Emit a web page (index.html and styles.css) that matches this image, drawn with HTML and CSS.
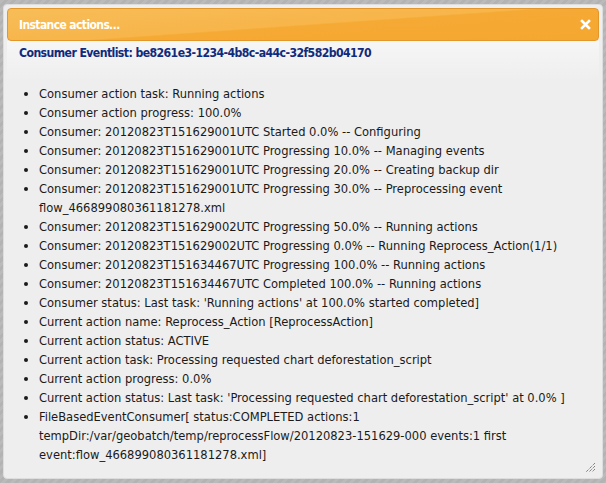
FILE: index.html
```html
<!DOCTYPE html>
<html>
<head>
<meta charset="utf-8">
<link rel="stylesheet" href="styles.css">
</head>
<body>
<div class="dialog">
  <div class="titlebar">
    <span class="title">Instance actions…</span>
    <span class="close" aria-label="close">
      <svg width="11" height="11" viewBox="0 0 11 11"><path d="M2 2 L9 9 M9 2 L2 9" stroke="#fff" stroke-width="2.6" stroke-linecap="square"/></svg>
    </span>
  </div>
  <div class="content">
    <h3 class="heading">Consumer Eventlist: be8261e3-1234-4b8c-a44c-32f582b04170</h3>
    <ul class="events">
      <li>Consumer action task: Running actions</li>
      <li>Consumer action progress: 100.0%</li>
      <li>Consumer: 20120823T151629001UTC Started 0.0% -- Configuring</li>
      <li>Consumer: 20120823T151629001UTC Progressing 10.0% -- Managing events</li>
      <li>Consumer: 20120823T151629001UTC Progressing 20.0% -- Creating backup dir</li>
      <li>Consumer: 20120823T151629001UTC Progressing 30.0% -- Preprocessing event flow_466899080361181278.xml</li>
      <li>Consumer: 20120823T151629002UTC Progressing 50.0% -- Running actions</li>
      <li>Consumer: 20120823T151629002UTC Progressing 0.0% -- Running Reprocess_Action(1/1)</li>
      <li>Consumer: 20120823T151634467UTC Progressing 100.0% -- Running actions</li>
      <li>Consumer: 20120823T151634467UTC Completed 100.0% -- Running actions</li>
      <li>Consumer status: Last task: 'Running actions' at 100.0% started completed]</li>
      <li>Current action name: Reprocess_Action [ReprocessAction]</li>
      <li>Current action status: ACTIVE</li>
      <li>Current action task: Processing requested chart deforestation_script</li>
      <li>Current action progress: 0.0%</li>
      <li>Current action status: Last task: 'Processing requested chart deforestation_script' at 0.0% ]</li>
      <li>FileBasedEventConsumer[ status:COMPLETED actions:1 tempDir:/var/geobatch/temp/reprocessFlow/20120823-151629-000 events:1 first event:flow_466899080361181278.xml]</li>
    </ul>
    <span class="grip">
      <svg width="11" height="11" viewBox="0 0 11 11"><path d="M10 1 L1 10 M10 4 L4 10 M10 7 L7 10" stroke="#555" stroke-width="1" stroke-dasharray="1 1"/></svg>
    </span>
  </div>
</div>
</body>
</html>
```
FILE: styles.css
```css
html, body {
  margin: 0;
  padding: 0;
}
body {
  width: 606px;
  height: 483px;
  overflow: hidden;
  background: repeating-linear-gradient(135deg, #bababa 0, #bababa 3px, #b3b3b3 3px, #b3b3b3 6px);
  font-family: "DejaVu Sans Condensed", "DejaVu Sans", sans-serif;
}
.dialog {
  position: relative;
  box-sizing: border-box;
  margin: 4px 0 0 3px;
  width: 600px;
  height: 475px;
  padding: 3px;
  background: #eeeeee;
  border: 1px solid #dddddd;
  border-radius: 4px;
  display: flex;
  flex-direction: column;
}
.titlebar {
  box-sizing: border-box;
  height: 33px;
  display: flex;
  align-items: center;
  justify-content: space-between;
  padding: 0 7px 0 11px;
  border: 1px solid #e3962a;
  border-radius: 4px;
  background: linear-gradient(176deg, #f8bd58 0%, #f7b54a 50%, #f5aa35 52%, #f5a830 100%);
}
.title {
  color: #ffffff;
  font-weight: bold;
  font-size: 12px;
  letter-spacing: -0.6px;
}
.close {
  display: flex;
}
.content {
  position: relative;
  flex: 1;
  padding: 0 12px;
  background: linear-gradient(#f6f6f6 0, #eeeeee 40px);
}
.heading {
  margin: 3px 0 0;
  color: #102a7c;
  font-size: 12.2px;
  letter-spacing: -0.6px;
  font-weight: bold;
  line-height: 19px;
}
.events {
  margin: 21px 0 0;
  padding-left: 20px;
  font-size: 12.8px;
  line-height: 19px;
  color: #1a1a1a;
}
.grip {
  position: absolute;
  right: 3px;
  bottom: 2px;
  display: flex;
}
```
